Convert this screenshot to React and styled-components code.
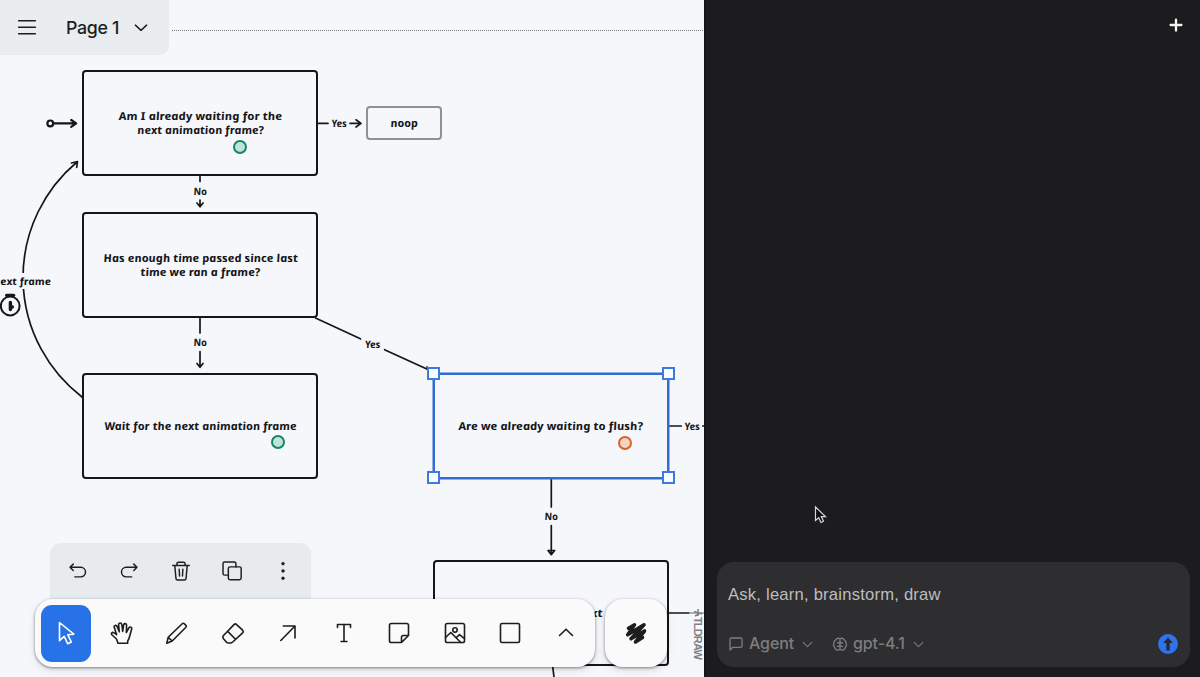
import styled, { createGlobalStyle, css } from "styled-components";

const ink = "#15161a";
const paper = "#f5f7fb";
const blue = "#2f6dd0";

const GlobalStyle = createGlobalStyle`
  * {
    box-sizing: border-box;
  }
  body {
    margin: 0;
    overflow: hidden;
    background: #1c1c1e;
    font-family: Inter, "Liberation Sans", sans-serif;
  }
`;

const Page = styled.div`
  display: flex;
  width: 1200px;
  height: 677px;
  overflow: hidden;
`;

const Board = styled.main`
  position: relative;
  flex: 0 0 704px;
  overflow: hidden;
  background: ${paper};
`;

const Lines = styled.svg`
  position: absolute;
  inset: 0;
  fill: none;
  stroke: ${ink};
  stroke-width: 1.7;
  stroke-linecap: round;
  stroke-linejoin: round;
`;

const Node = styled.div`
  position: absolute;
  left: ${(p) => p.$x}px;
  top: ${(p) => p.$y}px;
  width: ${(p) => p.$w || 236}px;
  height: ${(p) => p.$h || 106}px;
  display: flex;
  flex-direction: column;
  align-items: center;
  justify-content: center;
  padding-bottom: 1px;
  border: 2px solid ${(p) => p.$color || ink};
  border-radius: 4px;
  ${(p) => p.$selected && `box-shadow: 0 0 0 0.5px ${blue};`}
`;

/* un-slanted italics give the single-storey handwritten letters */
const handwriting = css`
  color: ${ink};
  font-family: "Noto Sans", "Open Sans", sans-serif;
  font-style: italic;
  font-weight: 700;
  white-space: nowrap;
  transform: scaleX(${(p) => p.$stretch || 1}) skewX(9deg);
`;

const TextLine = styled.span`
  ${handwriting}
  font-size: 11px;
  line-height: 14px;
`;

const Label = styled.span`
  ${handwriting}
  position: absolute;
  left: ${(p) => p.$x}px;
  top: ${(p) => p.$y}px;
  width: ${(p) => p.$w}px;
  font-size: 10px;
  line-height: 16px;
  text-align: center;
  background: ${paper};
`;

const Dot = styled.i`
  position: absolute;
  left: ${(p) => p.$x}px;
  top: ${(p) => p.$y}px;
  width: 14px;
  height: 14px;
  border: 2px solid ${(p) => p.$color};
  border-radius: 50%;
  background: ${(p) => p.$fill};
`;

const Handle = styled.i`
  position: absolute;
  left: ${(p) => p.$x}px;
  top: ${(p) => p.$y}px;
  width: 13px;
  height: 13px;
  border: 2px solid #3b7ae0;
  background: #fafcff;
`;

const Watermark = styled.div`
  position: absolute;
  left: 691px;
  top: 609px;
  display: flex;
  align-items: center;
  writing-mode: vertical-rl;
  color: #7f8185;
  font-family: "Liberation Sans", Arial, sans-serif;
  font-weight: 700;
  font-size: 11px;
  letter-spacing: -0.85px;
  line-height: 14px;
`;

const Interface = styled.div`
  position: absolute;
  inset: 0;
  display: flex;
  flex-direction: column;
  align-items: flex-start;
  justify-content: space-between;
`;

const PageMenu = styled.header`
  display: flex;
  align-items: center;
  width: 169px;
  height: 55px;
  padding: 0 0 1px 17px;
  border-radius: 0 0 10px 0;
  background: #e9edf0;
  color: #1d1e21;
`;

const PageName = styled.span`
  width: 54px;
  margin: 0 12px 0 29px;
  font-size: 17.8px;
  font-weight: 450;
  letter-spacing: -0.35px;
  white-space: nowrap;
`;

const Bottom = styled.div`
  display: flex;
  flex-direction: column;
  padding: 0 0 10px 35px;
`;

const Actions = styled.div`
  display: flex;
  width: 261px;
  height: 56px;
  margin-left: 15px;
  padding: 0 2px;
  border-radius: 11px 11px 0 0;
  background: #e8ebee;
`;

const Action = styled.button`
  flex: 1;
  display: flex;
  align-items: center;
  justify-content: center;
  padding: 0;
  border: 0;
  background: none;
  color: #1d1e21;
`;

const ToolRow = styled.div`
  display: flex;
  gap: 10px;
`;

const Tray = styled.div`
  display: flex;
  align-items: center;
  justify-content: space-between;
  width: ${(p) => p.$w}px;
  height: 68px;
  padding: 0 4px 0 6px;
  border-radius: 18px;
  background: #fafafa;
  box-shadow: 0 1px 3px rgba(0, 0, 0, 0.45), 0 3px 8px rgba(0, 0, 0, 0.1);
`;

const Tool = styled.button`
  display: flex;
  align-items: center;
  justify-content: center;
  width: 50px;
  height: 57px;
  padding: 0;
  border: 0;
  border-radius: 11px;
  background: ${(p) => (p.$active ? "#2872e8" : "none")};
  color: ${(p) => (p.$active ? "#fff" : "#1d1d1f")};
`;

const Panel = styled.aside`
  flex: 1;
  display: flex;
  flex-direction: column;
  justify-content: space-between;
  padding: 15px 10px 10px 11px;
  border-left: 2px solid #141517;
  background: #1c1c1e;
`;

const NewChat = styled.button`
  align-self: flex-end;
  display: flex;
  margin-right: 4px;
  padding: 0;
  border: 0;
  background: none;
  color: #f3f3f3;
`;

const Composer = styled.div`
  display: flex;
  flex-direction: column;
  justify-content: space-between;
  height: 105px;
  padding: 22px 12px 12px 11px;
  border-radius: 17px;
  background: #2e2e30;
`;

const Prompt = styled.div`
  color: #bdbdbf;
  font-family: "Liberation Sans", Arial, sans-serif;
  font-size: 16.6px;
  line-height: 22px;
  letter-spacing: 0.22px;
`;

const Options = styled.div`
  display: flex;
  align-items: center;
  color: #7d7d80;
`;

const Option = styled.div`
  display: flex;
  align-items: center;
  width: ${(p) => p.$w}px;
  font-size: 16px;
  font-weight: 500;
  white-space: nowrap;

  span {
    margin: 0 7px 2px 5px;
    letter-spacing: -0.1px;
  }
`;

const Send = styled.button`
  display: flex;
  align-items: center;
  justify-content: center;
  width: 20px;
  height: 20px;
  margin-left: auto;
  padding: 0;
  border: 0;
  border-radius: 50%;
  background: #2f74ee;
`;

const Pointer = styled.svg`
  position: absolute;
  left: 813px;
  top: 505px;
`;

const Icon = ({ size = 24, width = 1.6, children }) => (
  <svg
    width={size}
    height={size}
    viewBox="0 0 24 24"
    fill="none"
    stroke="currentColor"
    strokeWidth={width}
    strokeLinecap="round"
    strokeLinejoin="round"
  >
    {children}
  </svg>
);

const actions = [
  { name: "undo", art: <path d="M6.800 4.500 3.300 8l3.500 3.500M3.300 8h11.700a5.200 5.200 0 0 1 0 10.400H8.500" /> },
  { name: "redo", art: <path d="M17.200 4.500 20.700 8l-3.500 3.500M20.700 8H9a5.200 5.200 0 0 0 0 10.400h6" /> },
  {
    name: "delete",
    art: (
      <>
        <path d="M3 6h18M7.500 6V4.300q0-1.800 1.800-1.800h5.400q1.800 0 1.800 1.800V6M5.200 6l1.300 14q.1 1.700 1.800 1.700h7.400q1.700 0 1.800-1.700L18.800 6" />
        <path d="M10 10l.4 7.500M14 10l-.4 7.500" />
      </>
    ),
  },
  {
    name: "duplicate",
    art: (
      <>
        <rect x="8" y="7.500" width="14" height="14" rx="1.800" />
        <path d="M8 16.500H4Q2.200 16.500 2.200 14.700V4Q2.200 2.200 4 2.200h10.500q1.800 0 1.800 1.800v3.500" />
      </>
    ),
  },
  {
    name: "more",
    art: (
      <g fill="currentColor" strokeWidth="0.4">
        <circle cx="12" cy="4" r="1.600" />
        <circle cx="12" cy="12" r="1.600" />
        <circle cx="12" cy="20" r="1.600" />
      </g>
    ),
  },
];

const tools = [
  { name: "select", art: <path d="M5.500 1.500v18.200l4.700-4.300 3.500 7.300 3.600-1.700-3.500-7.200 6-.6z" /> },
  {
    name: "hand",
    art: (
      <path d="M8 22.300 6.500 18 2.100 14c-1.500-1.500.2-3.500 2-2.200l2.500 1.800-2.300-7c-.7-2.200 2-3 2.800-1l2.200 5.200-.7-7c-.1-2.300 2.900-2.500 3.200-.2l.9 6.800.9-6.300c.3-2.200 3.200-1.800 3 .4l-.3 7 2.500-4.500c1.200-1.900 3.500-.8 2.800 1.200l-2.300 8.300c-.4 1.500-.9 2.400-1.600 3.400v2.400z" />
    ),
  },
  { name: "draw", art: <path d="M1.800 22.300l1.400-6L17.200 2.700q1-1 2 0l1.700 1.600q1 1 0 2L7.200 20zM3.200 16.300l4 3.700" /> },
  { name: "eraser", art: <path d="M2.500 14.500 13 3.600q1.300-1.300 2.600 0l6 5.600q1.300 1.300 0 2.600L11.800 21q-1.200 1-2.500 1H7.200q-1 0-1.700-.8l-3-3.400q-1.200-1.600 0-3.300zM6.700 10.400l7.800 7.800" /> },
  { name: "arrow", art: <path d="M4.800 19.500 19 5M7.300 5H19v12" /> },
  { name: "text", art: <path d="M5.500 6.500V3.500h13v3M12 3.500v17M9 20.500h6" /> },
  { name: "note", art: <path d="M14.500 21.500H4.300Q2.500 21.500 2.500 19.700V4.300Q2.500 2.500 4.300 2.500h15.400q1.800 0 1.800 1.800v10.200L14.500 21.500V16.300q0-1.800 1.800-1.800h5.200" /> },
  {
    name: "media",
    art: (
      <>
        <rect x="2.500" y="2.500" width="19" height="19" rx="1.800" />
        <circle cx="12" cy="9" r="2.200" />
        <path d="m2.500 16.500 5.300-5 10 10M13.200 16.800l3.300-3.200 5 4" />
      </>
    ),
  },
  { name: "rectangle", art: <rect x="2.500" y="2.500" width="19" height="19" rx="1.500" /> },
  { name: "expand", art: <path d="m5.500 14.500 6.500-6.300 6.500 6.300" /> },
];

const handles = [
  [427, 367],
  [662, 367],
  [427, 471],
  [662, 471],
];

const Arrows = () => (
  <Lines width="704" height="677">
    <path d="M172 30.500H704" stroke="#77797d" strokeWidth="1" strokeDasharray="1 1" strokeLinecap="butt" />
    <g strokeWidth="2.200">
      <circle cx="50.300" cy="123.400" r="2.900" />
      <path d="M53.500 123.400H76M71.200 120l5 3.400-5 3.400" />
    </g>
    <path d="M318 123.400h10M350 123.400h11M356 119.800l5 3.600-5 3.600" />
    <path d="M200 176.500v5M200 200v6M197 203l3 3.800 3-3.800" />
    <path d="M200 318v15M200 351.500v15M197 363.500l3 3.800 3-3.800" />
    <path d="M82 397A150.600 150.600 0 0 1 77 162M71.500 163l6-1.500-.8 6" />
    <path d="M315.500 318 362 339.500M384 349.500 429 370M427 367l3 3.500" />
    <path d="M669.500 426h12M702.500 426h4" />
    <path d="M551.300 479v28M551.300 525.500v28M548 550.500l3.300 4.200 3.300-4.200z" />
    <path d="M669 613h20" />
    <path d="M690 613h16" stroke="#96989c" />
    <path d="M552.500 665l1.500 12" />
    <circle cx="10.200" cy="306" r="9.400" strokeWidth="2" />
    <path d="M6.500 295.300h7.200" strokeWidth="3" />
    <path d="M10.400 302.500v7M10.400 307l2 0" strokeWidth="3.400" />
  </Lines>
);

const App = () => {
  return (
    <Page>
      <GlobalStyle />
      <Board>
        <Arrows />
        <Node $x={82} $y={70}>
          <TextLine $stretch={1.115}>Am I already waiting for the</TextLine>
          <TextLine $stretch={1.065}>next animation frame?</TextLine>
        </Node>
        <Node $x={82} $y={212}>
          <TextLine $stretch={1.085}>Has enough time passed since last</TextLine>
          <TextLine $stretch={1.085}>time we ran a frame?</TextLine>
        </Node>
        <Node $x={82} $y={373}>
          <TextLine $stretch={1.075}>Wait for the next animation frame</TextLine>
        </Node>
        <Node $x={366} $y={106} $w={76} $h={34} $color="#8f9196">
          <TextLine $stretch={1.05}>noop</TextLine>
        </Node>
        <Node $x={433} $y={373} $color={blue} $selected>
          <TextLine $stretch={1.105}>Are we already waiting to flush?</TextLine>
        </Node>
        <Node $x={433} $y={560}>
          <TextLine $stretch={1.15}>Flush on the next</TextLine>
        </Node>
        <Label $x={329} $y={115} $w={20}>Yes</Label>
        <Label $x={190} $y={183} $w={20}>No</Label>
        <Label $x={190} $y={334} $w={20}>No</Label>
        <Label $x={362} $y={336} $w={21}>Yes</Label>
        <Label $x={682} $y={418} $w={20}>Yes</Label>
        <Label $x={541} $y={508} $w={20}>No</Label>
        <Label $x={-8} $y={273} $w={60} $stretch={1.1}>next frame</Label>
        <Dot $x={233} $y={140} $color="#158764" $fill="#bfe3d6" />
        <Dot $x={271} $y={435} $color="#158764" $fill="#bfe3d6" />
        <Dot $x={618} $y={436} $color="#d9602c" $fill="#f5d3c2" />
        {handles.map(([x, y]) => (
          <Handle key={`${x}-${y}`} $x={x} $y={y} />
        ))}
        <Watermark>
          <svg width="11" height="8" viewBox="0 0 11 8" fill="none" stroke="currentColor" strokeWidth="1.500">
            <path d="M1 2.500 9 5M5 0v7M2 7l4-2" />
          </svg>
          TLDRAW
        </Watermark>

        <Interface>
          <PageMenu>
            <Icon size={20} width={1.9}>
              <path d="M2 4.500h20M2 12.300h20M2 20.100h20" />
            </Icon>
            <PageName>Page 1</PageName>
            <Icon size={18} width={1.9}>
              <path d="m4.500 9.500 7.500 7 7.500-7" />
            </Icon>
          </PageMenu>
          <Bottom>
            <Actions>
              {actions.map((a) => (
                <Action key={a.name} aria-label={a.name}>
                  <Icon size={22}>{a.art}</Icon>
                </Action>
              ))}
            </Actions>
            <ToolRow>
              <Tray $w={560}>
                {tools.map((t, i) => (
                  <Tool key={t.name} aria-label={t.name} $active={i === 0}>
                    <Icon>{t.art}</Icon>
                  </Tool>
                ))}
              </Tray>
              <Tray $w={62}>
                <Tool aria-label="scribble">
                  <Icon width={3.6}>
                    <path d="M4.500 7.200 10.500 3.800 3.700 13.800 20 3.800 7 17.800 20.500 10 11.500 21 18.500 16.500" />
                  </Icon>
                </Tool>
              </Tray>
            </ToolRow>
          </Bottom>
        </Interface>
      </Board>

      <Panel>
        <NewChat aria-label="new chat">
          <Icon size={20} width={2.8}>
            <path d="M12 5.500v13M5.500 12h13" />
          </Icon>
        </NewChat>
        <Composer>
          <Prompt>Ask, learn, brainstorm, draw</Prompt>
          <Options>
            <Option $w={104}>
              <Icon size={16} width={2}>
                <path d="M3 21V5q0-2 2-2h14q2 0 2 2v10q0 2-2 2H7z" />
              </Icon>
              <span>Agent</span>
              <Icon size={13} width={2}>
                <path d="m4 8 8 8 8-8" />
              </Icon>
            </Option>
            <Option $w={110}>
              <Icon size={16} width={2}>
                <path d="M12 4.500a3.500 3.500 0 0 0-6 1.300 4 4 0 0 0-2.800 5A4.200 4.200 0 0 0 4 17a4 4 0 0 0 4.500 4A3.500 3.500 0 0 0 12 19.500M12 4.500a3.500 3.500 0 0 1 6 1.300 4 4 0 0 1 2.800 5A4.200 4.200 0 0 1 20 17a4 4 0 0 1-4.500 4 3.500 3.500 0 0 1-3.500-1.500M12 4.500v15M8 10.500q3.500 0 4-2M16 10.500q-3.500 0-4-2M8 15.500q3 0 4-2M16 15.500q-3 0-4-2" />
              </Icon>
              <span>gpt-4.1</span>
              <Icon size={13} width={2}>
                <path d="m4 8 8 8 8-8" />
              </Icon>
            </Option>
            <Send aria-label="send">
              <svg width="12" height="14" viewBox="0 0 12 14" fill="#252a35">
                <path d="M6 .5 11 6H7.700v7.500H4.300V6H1z" />
              </svg>
            </Send>
          </Options>
        </Composer>
      </Panel>
      <Pointer width="16" height="20" viewBox="0 0 16 20">
        <path d="M2.500 2v13.500l3.200-2.800 2.300 4.800 2.500-1.200-2.200-4.700h4.200z" fill="#101012" stroke="#d8d8d8" strokeWidth="1.200" />
      </Pointer>
    </Page>
  );
};

export default App;
